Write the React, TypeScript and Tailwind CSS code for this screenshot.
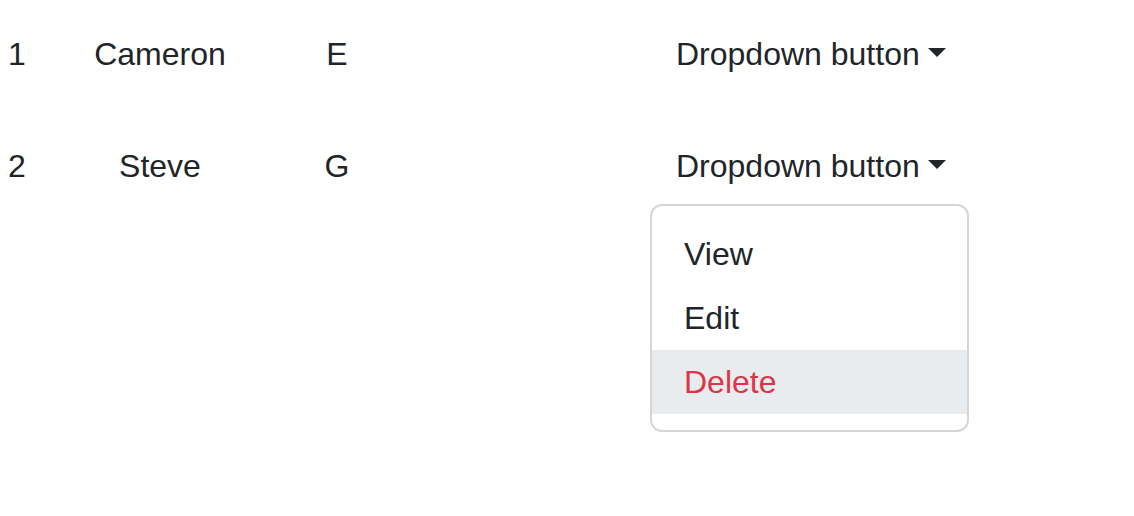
import React from 'react';

const rows = [
  { id: 1, name: 'Cameron', grade: 'E', open: false },
  { id: 2, name: 'Steve', grade: 'G', open: true },
];

const Caret = () => (
  <span className="ml-[8px] inline-block h-0 w-0 border-x-[9px] border-t-[9px] border-x-transparent border-t-[#212529] align-[8px]"></span>
);

const App: React.FC = () => {
  return (
    <div
      className="min-h-screen bg-white text-[32px] leading-[48px] text-[#212529]"
      style={{ fontFamily: '"Liberation Sans", Arial, sans-serif' }}
    >
      <div className="flex flex-col gap-[4px]">
        {rows.map(row => (
          <div key={row.id} className="flex h-[108px] items-center">
            <div className="w-[34px] text-center">{row.id}</div>
            <div className="w-[252px] text-center">{row.name}</div>
            <div className="w-[102px] text-center">{row.grade}</div>
            <div className="w-[262px]"></div>
            <div className="relative">
              <button className="whitespace-nowrap rounded-[12px] border-2 border-transparent bg-transparent px-[24px] py-[12px] text-[32px] leading-[48px] text-[#212529]">
                Dropdown button
                <Caret />
              </button>
              {row.open && (
                <div className="absolute left-0 top-[76px] z-10 w-[319px] rounded-[12px] border-2 border-[#d6d6d6] bg-white py-[16px]">
                  <div className="px-[32px] py-[8px]">View</div>
                  <div className="px-[32px] py-[8px]">Edit</div>
                  <div className="bg-[#e9ecef] px-[32px] py-[8px] text-[#dc3545]">Delete</div>
                </div>
              )}
            </div>
          </div>
        ))}
      </div>
    </div>
  );
};

export default App;
